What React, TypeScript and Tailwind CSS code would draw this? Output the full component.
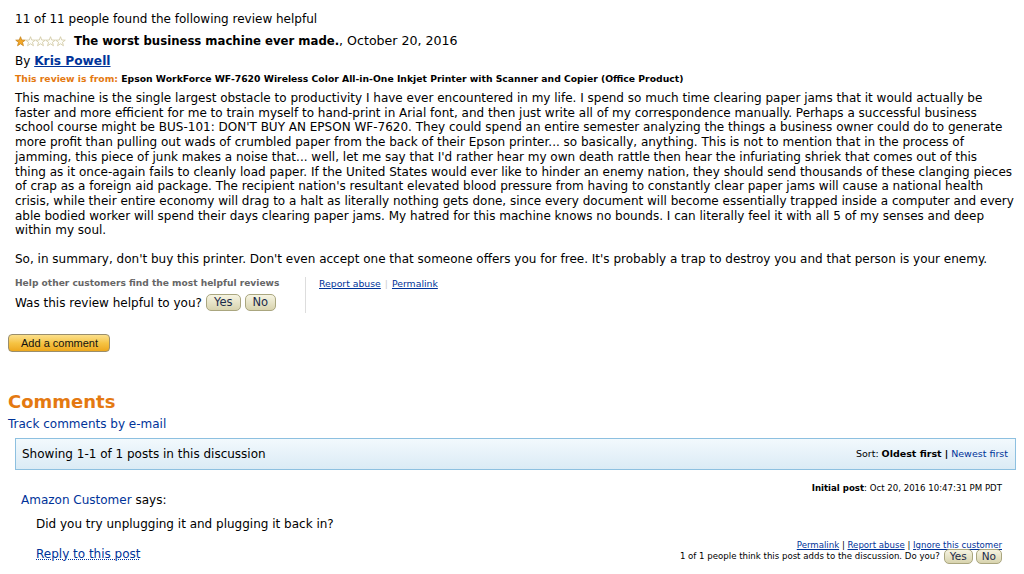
import React from "react";

const V = { fontFamily: '"DejaVu Sans", Verdana, sans-serif' };

function Stars() {
  return (
    <svg width="52" height="11" viewBox="0 0 52 11" className="shrink-0">
      {[0, 1, 2, 3, 4].map((i) => {
        const cx = 5.5 + i * 10;
        const pts = [];
        for (let k = 0; k < 10; k++) {
          const r = k % 2 === 0 ? 5 : 2.1;
          const a = (Math.PI / 5) * k - Math.PI / 2;
          pts.push(`${(cx + r * Math.cos(a)).toFixed(2)},${(5.7 + r * Math.sin(a)).toFixed(2)}`);
        }
        return (
          <polygon
            key={i}
            points={pts.join(" ")}
            fill={i === 0 ? "#f3a727" : "#fdfdf8"}
            stroke={i === 0 ? "#c6841a" : "#cfc6a0"}
            strokeWidth="0.8"
          />
        );
      })}
    </svg>
  );
}

function SmallBtn({ children, small }: { children: React.ReactNode; small?: boolean }) {
  return (
    <span
      className={
        small
          ? "inline-flex items-center justify-center h-[15px] px-[5px] rounded-[5px] border border-[#aaa67f] bg-gradient-to-b from-[#f6f4e2] to-[#d8d3ae] text-[#1b2a4a] text-[10.5px] leading-none"
          : "inline-flex items-center justify-center h-[17px] px-[7px] rounded-[5px] border border-[#aaa67f] bg-gradient-to-b from-[#f6f4e2] to-[#d8d3ae] text-[#1b2a4a] text-[11.5px] leading-none"
      }
    >
      {children}
    </span>
  );
}

const lines = [
  "This machine is the single largest obstacle to productivity I have ever encountered in my life. I spend so much time clearing paper jams that it would actually be",
  "faster and more efficient for me to train myself to hand-print in Arial font, and then just write all of my correspondence manually. Perhaps a successful business",
  "school course might be BUS-101: DON'T BUY AN EPSON WF-7620. They could spend an entire semester analyzing the things a business owner could do to generate",
  "more profit than pulling out wads of crumbled paper from the back of their Epson printer... so basically, anything. This is not to mention that in the process of",
  "jamming, this piece of junk makes a noise that... well, let me say that I'd rather hear my own death rattle then hear the infuriating shriek that comes out of this",
  "thing as it once-again fails to cleanly load paper. If the United States would ever like to hinder an enemy nation, they should send thousands of these clanging pieces",
  "of crap as a foreign aid package. The recipient nation's resultant elevated blood pressure from having to constantly clear paper jams will cause a national health",
  "crisis, while their entire economy will drag to a halt as literally nothing gets done, since every document will become essentially trapped inside a computer and every",
  "able bodied worker will spend their days clearing paper jams. My hatred for this machine knows no bounds. I can literally feel it with all 5 of my senses and deep",
  "within my soul.",
];

export default function App() {
  return (
    <div className="w-[1024px] h-[574px] overflow-hidden bg-white text-black" style={V}>
      <div className="pl-[15px] pt-[12px]">
        <div className="text-[12px] leading-[15px]">11 of 11 people found the following review helpful</div>
        <div className="flex items-center mt-[7px] h-[15px]">
          <Stars />
          <span className="ml-[7px] text-[11.7px] font-bold">The worst business machine ever made.</span>
          <span className="text-[12.6px]">, October 20, 2016</span>
        </div>
        <div className="mt-[5px] text-[12px] leading-[15px]">
          By{" "}
          <a className="font-bold text-[#003399] underline text-[12.2px]">Kris Powell</a>
        </div>
        <div className="mt-[3px] text-[9.25px] leading-[13px] font-bold">
          <span className="text-[#e47911]">This review is from: </span>
          <span>Epson WorkForce WF-7620 Wireless Color All-in-One Inkjet Printer with Scanner and Copier (Office Product)</span>
        </div>
        <div className="text-[12px] leading-[14.7px] whitespace-nowrap mt-[6px]">
          {lines.map((l, i) => (
            <div key={i}>{l}</div>
          ))}
          <div className="h-[14px]" />
          <div>So, in summary, don't buy this printer. Don't even accept one that someone offers you for free. It's probably a trap to destroy you and that person is your enemy.</div>
        </div>
        <div className="flex mt-[10px]">
          <div className="w-[290px] pr-[10px]">
            <div className="text-[9.1px] font-bold text-[#666] leading-[13px]">Help other customers find the most helpful reviews</div>
            <div className="flex items-center mt-[4px] text-[12px]">
              <span className="mr-[4px]">Was this review helpful to you?</span>
              <SmallBtn>Yes</SmallBtn>
              <span className="w-[4px]" />
              <SmallBtn>No</SmallBtn>
            </div>
          </div>
          <div className="border-l border-[#ddd] h-[36px] pl-[13px] text-[9.3px] leading-[13px] text-[#003399]">
            <a className="underline">Report abuse</a>
            <span className="text-[#ccc] mx-[4px]">|</span>
            <a className="underline">Permalink</a>
          </div>
        </div>
      </div>
      <div className="pl-[8px] mt-[17px]">
        <button
          className="w-[102px] h-[18px] rounded-[4px] border border-[#9a8e6c] bg-gradient-to-b from-[#fbe08a] via-[#f6c443] to-[#eda81c] text-[11px] leading-none text-[#111] text-left pl-[12px]"
          style={{ fontFamily: '"Liberation Sans", Arial, sans-serif' }}
        >
          Add a comment
        </button>
      </div>
      <div className="pl-[8px] mt-[37px]">
        <div className="text-[#e47911] font-bold text-[18px] leading-[22px]">Comments</div>
        <div className="text-[#003399] text-[12px] leading-[15px] mt-[4px]">Track comments by e-mail</div>
      </div>
      <div className="mx-[15px] w-[1001px] mt-[6px] h-[32px] border border-[#8dc0e0] bg-gradient-to-b from-[#f2f9fd] to-[#dbebf5] flex items-center justify-between pl-[6px] pr-[7px]">
        <span className="text-[12px]">Showing 1-1 of 1 posts in this discussion</span>
        <span className="text-[9.5px]">
          Sort: <b>Oldest first</b> <b>|</b> <a className="text-[#003399]">Newest first</a>
        </span>
      </div>
      <div className="flex justify-between pl-[21px] pr-[22px] mt-[11px]">
        <div className="text-[12px] leading-[15px] pt-[12px]">
          <div>
            <span className="text-[#003399]">Amazon Customer</span> says:
          </div>
          <div className="pl-[15px] mt-[9px]">Did you try unplugging it and plugging it back in?</div>
          <div className="pl-[15px] mt-[15px]">
            <a className="text-[#003399] underline decoration-dotted">Reply to this post</a>
          </div>
        </div>
        <div className="flex flex-col items-end text-[8.6px] leading-[12px] pt-[1px]">
          <div>
            <b>Initial post</b>: Oct 20, 2016 10:47:31 PM PDT
          </div>
          <div className="mt-[45px] text-[#003399]">
            <a className="underline">Permalink</a> <span className="text-black">|</span>{" "}
            <a className="underline">Report abuse</a> <span className="text-black">|</span>{" "}
            <a className="underline">Ignore this customer</a>
          </div>
          <div className="flex items-center -mt-[2px]">
            <span className="mr-[4px]">1 of 1 people think this post adds to the discussion. Do you?</span>
            <SmallBtn small>Yes</SmallBtn>
            <span className="w-[3px]" />
            <SmallBtn small>No</SmallBtn>
          </div>
        </div>
      </div>
    </div>
  );
}
